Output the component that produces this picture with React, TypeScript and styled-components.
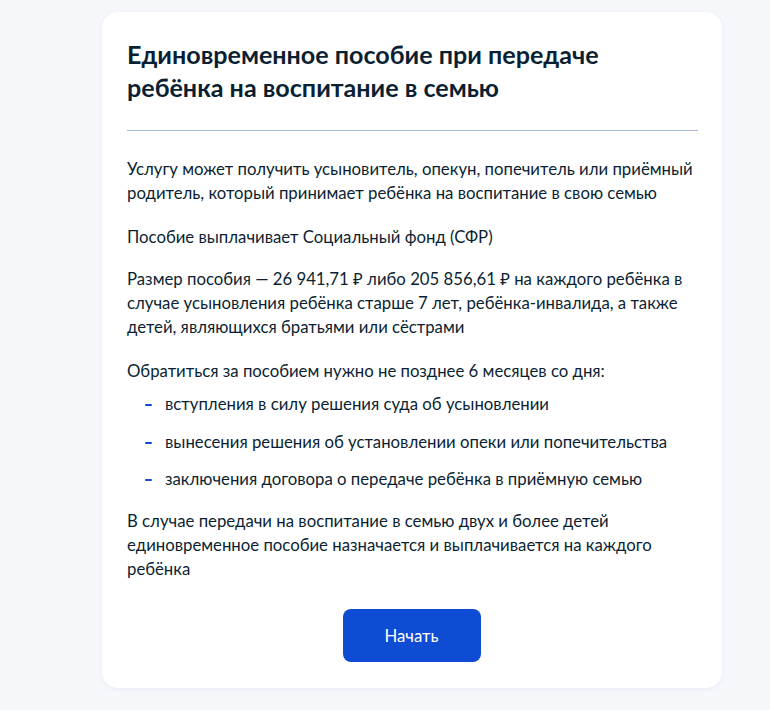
import React from "react";
import styled, { createGlobalStyle } from "styled-components";

const GlobalStyle = createGlobalStyle`
  html, body {
    margin: 0;
    padding: 0;
    background: #f5f7fb;
  }
  body {
    font-family: Lato, "Open Sans", "Noto Sans", sans-serif;
    color: #0b1f33;
    -webkit-font-smoothing: antialiased;
  }
`;

const Page = styled.div`
  min-height: 710px;
  box-sizing: border-box;
  padding: 12px 0 0 102px;
`;

const Card = styled.section`
  width: 620px;
  box-sizing: border-box;
  background: #ffffff;
  border-radius: 16px;
  box-shadow: 0 1px 4px rgba(102, 130, 179, 0.1);
  padding: 26px 24px 26px 25px;
`;

const Title = styled.h1`
  margin: 0;
  font-size: 25.1px;
  line-height: 33px;
  font-weight: 700;
  color: #0b1f33;
`;

const Divider = styled.hr`
  margin: 26px 0 26px;
  border: 0;
  height: 1px;
  background: #a9bbd8;
`;

const Text = styled.p<{ $gap?: number }>`
  margin: ${(p) => p.$gap ?? 18}px 0 0;
  font-size: 16.75px;
  line-height: 24px;
  color: #0b1f33;
`;

const List = styled.ul`
  list-style: none;
  margin: 9px 0 0;
  padding: 0 0 0 18px;
  display: flex;
  flex-direction: column;
  gap: 13.5px;
`;

const Item = styled.li`
  display: flex;
  align-items: flex-start;
  gap: 13px;
  font-size: 16.75px;
  line-height: 24px;

  &::before {
    content: "";
    flex: none;
    width: 7px;
    height: 2px;
    margin-top: 12px;
    background: #0d4cd3;
    border-radius: 1px;
  }
`;

const Actions = styled.div`
  display: flex;
  justify-content: center;
  margin-top: 28px;
  padding-right: 2px;
`;

const Button = styled.button`
  width: 138px;
  height: 53px;
  border: 0;
  border-radius: 8px;
  background: #0d4cd3;
  color: #ffffff;
  font-family: Lato, "Open Sans", sans-serif;
  font-size: 16.75px;
  line-height: 24px;
  cursor: pointer;
`;

const NNBSP = "\u202F";

export default function App() {
  return (
    <>
      <GlobalStyle />
      <Page>
        <Card>
          <Title>
            Единовременное пособие при передаче
            <br />
            ребёнка на воспитание в семью
          </Title>
          <Divider />
          <Text $gap={0}>
            Услугу может получить усыновитель, опекун, попечитель или приёмный
            родитель, который принимает ребёнка на воспитание в свою семью
          </Text>
          <Text $gap={20}>Пособие выплачивает Социальный фонд (СФР)</Text>
          <Text $gap={18}>
            Размер пособия — 26{NNBSP}941,71 ₽ либо 205{NNBSP}856,61 ₽ на
            каждого ребёнка в
            <br />
            случае усыновления ребёнка старше 7 лет, ребёнка-инвалида, а также
            <br />
            детей, являющихся братьями или сёстрами
          </Text>
          <Text $gap={20}>
            Обратиться за пособием нужно не позднее 6 месяцев со дня:
          </Text>
          <List>
            <Item>вступления в силу решения суда об усыновлении</Item>
            <Item>вынесения решения об установлении опеки или попечительства</Item>
            <Item>заключения договора о передаче ребёнка в приёмную семью</Item>
          </List>
          <Text $gap={18}>
            В случае передачи на воспитание в семью двух и более детей
            <br />
            единовременное пособие назначается и выплачивается на каждого
            <br />
            ребёнка
          </Text>
          <Actions>
            <Button>Начать</Button>
          </Actions>
        </Card>
      </Page>
    </>
  );
}
